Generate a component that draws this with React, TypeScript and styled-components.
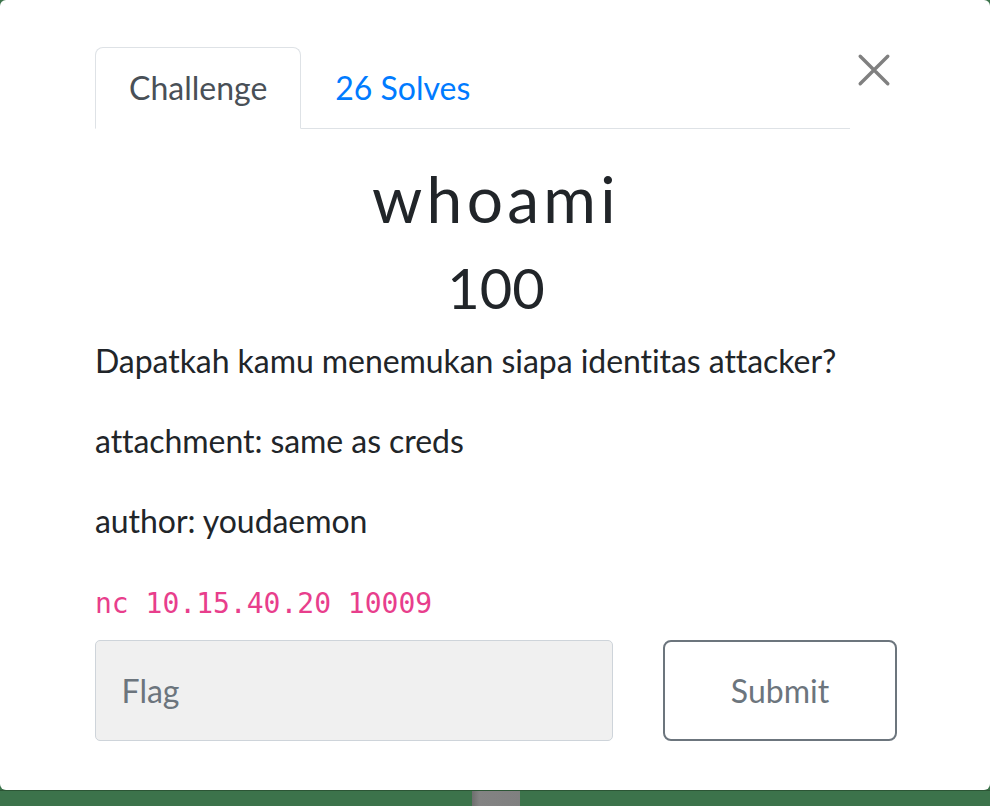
import React from "react";
import styled, { createGlobalStyle } from "styled-components";

const Global = createGlobalStyle`
  html, body { margin: 0; padding: 0; background: #3c734b; }
  body { font-family: Lato, "Open Sans", sans-serif; color: #212529; }
  * { box-sizing: border-box; }
`;

const Page = styled.div`
  width: 990px;
  height: 806px;
  display: flex;
  flex-direction: column;
  overflow: hidden;
`;

const Modal = styled.div`
  background: #fff;
  height: 790px;
  flex: none;
  border-radius: 6px;
  padding: 47px 93px 0 95px;
  display: flex;
  flex-direction: column;
`;

const BottomStrip = styled.div`
  flex: 1;
  border-top: 1px solid #2c5535;
  display: flex;
  padding-left: 472px;
`;

const ScrollThumb = styled.div`
  width: 48px;
  background: linear-gradient(90deg, #6e6e6e 0%, #838383 15%, #808080 100%);
`;

const Header = styled.div`
  display: flex;
  align-items: flex-start;
`;

const Tabs = styled.nav`
  flex: 1;
  display: flex;
  border-bottom: 1px solid #dee2e6;
`;

const Tab = styled.a<{ $active?: boolean }>`
  display: block;
  font-size: 32px;
  line-height: 48px;
  padding: 16px 33px;
  margin-bottom: -1px;
  border: 1px solid ${(p) => (p.$active ? "#dee2e6" : "transparent")};
  border-bottom-color: ${(p) => (p.$active ? "#fff" : "transparent")};
  border-radius: 8px 8px 0 0;
  background: ${(p) => (p.$active ? "#fff" : "transparent")};
  color: ${(p) => (p.$active ? "#495057" : "#007bff")};
  text-decoration: none;
  cursor: pointer;
`;

const CloseButton = styled.button`
  width: 47px;
  height: 46px;
  padding: 0;
  border: 0;
  background: transparent;
  display: flex;
  align-items: center;
  justify-content: center;
  cursor: pointer;
`;

const Title = styled.h2`
  margin: 0 0 16px;
  padding-top: 32px;
  font-size: 64px;
  line-height: 1.2;
  font-weight: 400;
  letter-spacing: 4.3px;
  text-align: center;
`;

const Value = styled.h3`
  margin: 0 0 16px;
  font-size: 56px;
  line-height: 1.2;
  font-weight: 400;
  text-align: center;
`;

const Para = styled.p`
  margin: 0 0 32px;
  font-size: 32px;
  line-height: 48px;
  letter-spacing: -0.06px;
`;

const CodeLine = styled.p`
  margin: 0 0 12px;
  font-size: 32px;
  line-height: 48px;
`;

const Code = styled.code`
  font-family: "DejaVu Sans Mono", "Liberation Mono", monospace;
  font-size: 28px;
  color: #e83e8c;
`;

const SubmitRow = styled.form`
  display: grid;
  grid-template-columns: 1fr 234px;
  column-gap: 50px;
`;

const FlagInput = styled.input`
  width: 100%;
  height: 101px;
  padding: 25.6px;
  font-family: Lato, sans-serif;
  font-size: 32px;
  line-height: 48px;
  color: #495057;
  background: #f0f0f0;
  border: 1px solid #ced4da;
  border-radius: 5px;
  outline: none;
  &::placeholder { color: #6c757d; }
`;

const SubmitButton = styled.button`
  height: 101px;
  font-family: Lato, sans-serif;
  font-size: 32px;
  color: #6c757d;
  background: #fff;
  border: 2px solid #6c757d;
  border-radius: 8px;
  cursor: pointer;
`;

export default function App() {
  return (
    <Page>
      <Global />
      <Modal>
        <Header>
          <Tabs>
            <Tab $active>Challenge</Tab>
            <Tab>26 Solves</Tab>
          </Tabs>
          <CloseButton aria-label="Close">
            <svg width="34" height="34" viewBox="0 0 34 34">
              <path
                d="M3.2 3.2 L30.8 30.8 M30.8 3.2 L3.2 30.8"
                stroke="#808080"
                strokeWidth="3.4"
                strokeLinecap="round"
                fill="none"
              />
            </svg>
          </CloseButton>
        </Header>
        <Title>whoami</Title>
        <Value>100</Value>
        <Para>Dapatkah kamu menemukan siapa identitas attacker?</Para>
        <Para>attachment: same as creds</Para>
        <Para>author: youdaemon</Para>
        <CodeLine>
          <Code>nc 10.15.40.20 10009</Code>
        </CodeLine>
        <SubmitRow onSubmit={(e) => e.preventDefault()}>
          <FlagInput placeholder="Flag" />
          <SubmitButton type="submit">Submit</SubmitButton>
        </SubmitRow>
      </Modal>
      <BottomStrip>
        <ScrollThumb />
      </BottomStrip>
    </Page>
  );
}
